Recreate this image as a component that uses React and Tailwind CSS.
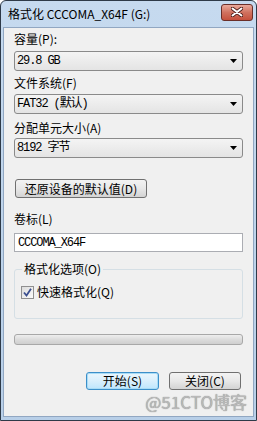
import React from "react";

const ui = { fontFamily: '"Noto Sans CJK SC", "Noto Sans", sans-serif' };
const mono = { fontFamily: '"Liberation Mono", "Noto Sans CJK SC", monospace' };

const Combo = ({ value }) => (
  <div className="flex h-[20px] items-center justify-between rounded-[3px] border border-[#8a8a8a] bg-gradient-to-b from-[#f4f4f4] to-[#e4e4e4] pl-[2px] pr-[5px]">
    <span className="text-[12px] leading-none tracking-[-1.1px] text-black" style={mono}>
      {value}
    </span>
    <svg width="7" height="4" viewBox="0 0 7 4">
      <path d="M0 0h7L3.5 4z" fill="#000" />
    </svg>
  </div>
);

const Label = ({ children, className = "" }) => (
  <div className={`text-[12px] leading-[16px] text-black ${className}`}>{children}</div>
);

const App = () => {
  return (
    <div
      className="flex h-[421px] w-[257px] flex-col overflow-hidden rounded-t-[6px] border border-[#2e3a48] bg-gradient-to-b from-[#c6daef] to-[#b8cfe8] px-[2px] pb-[3px]"
      style={ui}
    >
      {/* title bar */}
      <div className="flex h-[26px] shrink-0 items-center justify-between pl-[5px] pr-[1px]">
        <span className="text-[12px] leading-none text-black">格式化 CCCOMA_X64F (G:)</span>
        <div className="mb-[4px] flex h-[17px] w-[32px] items-center justify-center rounded-[3px] border border-[#6a2e28] bg-gradient-to-b from-[#e9a99b] via-[#d0715f] to-[#c5503c]">
          <svg width="12" height="10" viewBox="0 0 12 10">
            <path
              d="M1.5 1.5l9 7M10.5 1.5l-9 7"
              stroke="#4a1c18"
              strokeWidth="3.6"
              strokeLinecap="round"
            />
            <path d="M1.5 1.5l9 7M10.5 1.5l-9 7" stroke="#fff" strokeWidth="2" strokeLinecap="round" />
          </svg>
        </div>
      </div>

      {/* client */}
      <div className="relative flex flex-1 flex-col border border-[#91a7c2] bg-[#f0f0f0] px-[10px]">
        <Label className="mt-[3px]">容量(P):</Label>
        <div className="mt-[4px]">
          <Combo value="29.8 GB" />
        </div>

        <Label className="mt-[4px]">文件系统(F)</Label>
        <div className="mt-[3px]">
          <Combo value="FAT32 (默认)" />
        </div>

        <Label className="mt-[6px]">分配单元大小(A)</Label>
        <div className="mt-[2px]">
          <Combo value="8192 字节" />
        </div>

        <div className="mt-[21px] flex">
          <button className="ml-[1px] flex h-[19px] w-[132px] items-center justify-center rounded-[3px] border border-[#707070] bg-gradient-to-b from-[#f3f3f3] via-[#e8e8e8] to-[#d3d3d3] text-[12px] leading-none text-black">
            还原设备的默认值(D)
          </button>
        </div>

        <Label className="mt-[13px]">卷标(L)</Label>
        <div className="mt-[6px] flex h-[19px] items-center border border-[#abadb3] bg-white pl-[3px]">
          <span className="text-[12px] leading-none tracking-[-1.1px] text-black" style={mono}>
            CCCOMA_X64F
          </span>
        </div>

        {/* group box */}
        <div className="relative mt-[17px] h-[50px] rounded-[3px] border border-[#d5dfe5]">
          <div className="absolute -top-[9px] left-[7px] bg-[#f0f0f0] px-[2px] text-[12px] leading-[16px] text-black">
            格式化选项(O)
          </div>
          <div className="ml-[6px] mt-[14px] flex items-center gap-[3px]">
            <div className="flex h-[13px] w-[13px] items-center justify-center border border-[#8f8f8f] bg-gradient-to-br from-[#dcdcdc] to-[#fbfbfb]">
              <svg width="9" height="9" viewBox="0 0 9 9">
                <path d="M1 4.5l2.5 3L8 0.8" stroke="#3b4f8f" strokeWidth="1.8" fill="none" />
              </svg>
            </div>
            <span className="text-[12px] leading-[16px] text-black">快速格式化(Q)</span>
          </div>
        </div>

        {/* progress */}
        <div className="mt-[15px] h-[11px] rounded-[3px] border border-[#a8a8a8] bg-gradient-to-b from-[#eeeeee] via-[#dcdcdc] to-[#cfcfcf]" />

        {/* buttons */}
        <div className="mt-[27px] flex justify-end gap-[10px] pr-[2px]">
          <button className="flex h-[18px] w-[73px] items-center justify-center rounded-[3px] border border-[#3c8fc9] bg-gradient-to-b from-[#eaf6fd] via-[#d9effc] to-[#bee6fd] text-[12px] leading-none text-black shadow-[inset_0_0_0_1px_#a9dcf6]">
            开始(S)
          </button>
          <button className="flex h-[18px] w-[72px] items-center justify-center rounded-[3px] border border-[#707070] bg-gradient-to-b from-[#f3f3f3] via-[#e8e8e8] to-[#d3d3d3] text-[12px] leading-none text-black">
            关闭(C)
          </button>
        </div>

        {/* watermark */}
        <div
          className="absolute bottom-[6px] right-[6px] text-[17px] leading-none text-[#b9b9b9]"
          style={{ textShadow: "0 0 1px #7a7a7a" }}
        >
          @51CTO博客
        </div>
      </div>
    </div>
  );
};

export default App;
